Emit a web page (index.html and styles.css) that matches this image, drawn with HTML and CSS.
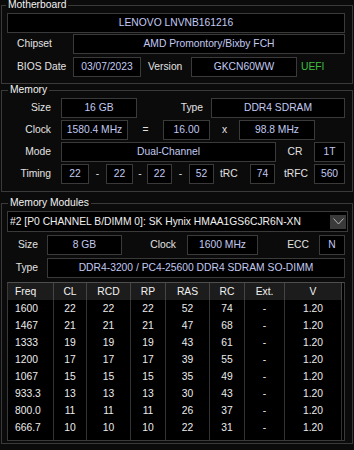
FILE: index.html
```html
<!DOCTYPE html>
<html lang="en">
<head>
    <meta charset="UTF-8">
    <title>Memory</title>
    <link rel="stylesheet" href="styles.css">
</head>
<body>

<section class="group group-mb">
    <h2 class="group-title">Motherboard</h2>
    <div class="row row-first"><span class="box">LENOVO LNVNB161216</span></div>
    <div class="row row-chipset">
        <span class="label label-l">Chipset</span>
        <span class="box">AMD Promontory/Bixby FCH</span>
    </div>
    <div class="row row-bios">
        <span class="label label-l">BIOS Date</span>
        <span class="box">03/07/2023</span>
        <span class="label label-version">Version</span>
        <span class="box">GKCN60WW</span>
        <span class="label uefi">UEFI</span>
    </div>
</section>

<section class="group group-mem">
    <h2 class="group-title">Memory</h2>
    <div class="row row-size">
        <span class="label label-r">Size</span>
        <span class="box">16 GB</span>
        <span class="label label-type">Type</span>
        <span class="box">DDR4 SDRAM</span>
    </div>
    <div class="row row-clock">
        <span class="label label-r">Clock</span>
        <span class="box">1580.4 MHz</span>
        <span class="label sign">=</span>
        <span class="box">16.00</span>
        <span class="label sign">x</span>
        <span class="box">98.8 MHz</span>
    </div>
    <div class="row row-mode">
        <span class="label label-r">Mode</span>
        <span class="box">Dual-Channel</span>
        <span class="label sign">CR</span>
        <span class="box">1T</span>
    </div>
    <div class="row row-timing">
        <span class="label label-r">Timing</span>
        <span class="box">22</span>
        <span class="label sign">-</span>
        <span class="box">22</span>
        <span class="label sign">-</span>
        <span class="box">22</span>
        <span class="label sign">-</span>
        <span class="box">52</span>
        <span class="label label-trc">tRC</span>
        <span class="box">74</span>
        <span class="label label-trfc">tRFC</span>
        <span class="box">560</span>
    </div>
</section>

<section class="group group-mods">
    <h2 class="group-title">Memory Modules</h2>
    <div class="module-select">
        <span>#2 [P0 CHANNEL B/DIMM 0]: SK Hynix HMAA1GS6CJR6N-XN</span>
        <span class="select-arrow">
            <svg width="11" height="7" viewBox="0 0 11 7"><polyline points="0.5,0.5 5.5,6 10.5,0.5" fill="none" stroke="#b4b4b4" stroke-width="1"/></svg>
        </span>
    </div>
    <div class="row row-msize">
        <span class="label label-m">Size</span>
        <span class="box">8 GB</span>
        <span class="label label-mclock">Clock</span>
        <span class="box">1600 MHz</span>
        <span class="label label-ecc">ECC</span>
        <span class="box">N</span>
    </div>
    <div class="row row-mtype">
        <span class="label label-m">Type</span>
        <span class="box">DDR4-3200 / PC4-25600 DDR4 SDRAM SO-DIMM</span>
    </div>

    <div class="spd">
        <table class="spd-table">
            <thead>
            <tr>
                <th class="c-freq freq">Freq</th>
                <th class="c-cl">CL</th>
                <th class="c-rcd">RCD</th>
                <th class="c-rp">RP</th>
                <th class="c-ras">RAS</th>
                <th class="c-rc">RC</th>
                <th class="c-ext">Ext.</th>
                <th class="c-v">V</th>
            </tr>
            </thead>
            <tbody>
            <tr><td class="freq">1600</td><td>22</td><td>22</td><td>22</td><td>52</td><td>74</td><td>-</td><td>1.20</td></tr>
            <tr><td class="freq">1467</td><td>21</td><td>21</td><td>21</td><td>47</td><td>68</td><td>-</td><td>1.20</td></tr>
            <tr><td class="freq">1333</td><td>19</td><td>19</td><td>19</td><td>43</td><td>61</td><td>-</td><td>1.20</td></tr>
            <tr><td class="freq">1200</td><td>17</td><td>17</td><td>17</td><td>39</td><td>55</td><td>-</td><td>1.20</td></tr>
            <tr><td class="freq">1067</td><td>15</td><td>15</td><td>15</td><td>35</td><td>49</td><td>-</td><td>1.20</td></tr>
            <tr><td class="freq">933.3</td><td>13</td><td>13</td><td>13</td><td>30</td><td>43</td><td>-</td><td>1.20</td></tr>
            <tr><td class="freq">800.0</td><td>11</td><td>11</td><td>11</td><td>26</td><td>37</td><td>-</td><td>1.20</td></tr>
            <tr><td class="freq">666.7</td><td>10</td><td>10</td><td>10</td><td>22</td><td>31</td><td>-</td><td>1.20</td></tr>
            <tr class="fill"><td></td><td></td><td></td><td></td><td></td><td></td><td></td><td></td></tr>
            </tbody>
        </table>
    </div>
</section>

</body>
</html>
```

FILE: styles.css
```css
html, body {
    margin: 0;
    padding: 0;
}
body {
    background-color: #0b0b0b;
    font-family: "Liberation Sans", Arial, sans-serif;
    font-size: 10.3px;
    color: #e2e2e2;
}

/* group boxes */
.group {
    margin: 0 1px;
    border: 1px solid #3a3a3a;
    padding: 0 7px 0 5px;
}
.group-mb {
    margin-top: 5px;
    padding-bottom: 6px;
}
.group-mem {
    margin-top: 6px;
    padding-bottom: 7px;
}
.group-mods {
    margin-top: 11px;
    padding-bottom: 2px;
}
.group-title {
    display: table;
    margin: -7px 0 0 1px;
    padding: 0 2px;
    height: 12px;
    line-height: 12px;
    font-size: 10.3px;
    font-weight: normal;
    color: #f2f2f2;
    background-color: #0b0b0b;
}
.group-mb .group-title {
    margin-left: -1px;
}

/* rows */
.row {
    display: grid;
    height: 20px;
    margin-top: 2px;
}
.group-mb .row-chipset {
    margin-top: 1px;
}
.group-mb .row-bios {
    margin-top: 3px;
}
.row-chipset { grid-template-columns: 66px 1fr; }
.row-bios { grid-template-columns: 66px 68px 50px 106px 1fr; }
.row-size { grid-template-columns: 54px 76px 74px 1fr; }
.row-clock { grid-template-columns: 54px 67px 35px 47px 29px 76px 1fr; }
.row-mode { grid-template-columns: 54px 215px 38px 1fr; }
.row-timing { grid-template-columns: 54px 28px 17px 27px 14px 25px 17px 25px 36px 25px 39px 1fr; }
.row-msize {
    grid-template-columns: 40px 75px 65px 71px 61px 1fr;
    margin-top: 3px;
}
.row-mtype {
    grid-template-columns: 40px 1fr;
    margin-top: 3px;
}

.box {
    box-sizing: border-box;
    height: 20px;
    line-height: 18px;
    border: 1px solid #3a3a3a;
    background-color: #000;
    color: #c2caf2;
    text-align: center;
    white-space: nowrap;
    overflow: hidden;
}

.label {
    line-height: 20px;
    white-space: nowrap;
    color: #e2e2e2;
}
.label-l { padding-left: 10px; }
.label-r { text-align: right; padding-right: 10px; }
.label-type { text-align: right; padding-right: 8px; }
.label-version { padding-left: 7px; }
.label-trc { padding-left: 6px; }
.label-trfc { padding-left: 9px; }
.label-m { text-align: right; padding-right: 9px; }
.label-mclock { text-align: right; padding-right: 11px; }
.label-ecc { text-align: right; padding-right: 10px; }
.sign { text-align: center; }
.uefi {
    padding-left: 4px;
    color: #3fbf3f;
}

/* module dropdown */
.module-select {
    display: flex;
    align-items: center;
    box-sizing: border-box;
    height: 21px;
    margin-top: 2px;
    margin-right: -3px;
    padding-left: 2px;
    border: 1px solid #3a3a3a;
    background-color: #000;
    color: #f0f0f0;
    white-space: nowrap;
}
.select-arrow {
    display: flex;
    align-items: center;
    justify-content: center;
    width: 16px;
    height: 14px;
    margin-left: auto;
    margin-right: 1px;
    background-color: #3a3a3a;
}

/* SPD timings table */
.spd {
    box-sizing: border-box;
    height: 159px;
    margin-top: 4px;
    border: 1px solid #3a3a3a;
    border-top-color: #4e4e4e;
    background-color: #000;
}
.spd-table {
    width: 334px;
    height: 100%;
    table-layout: fixed;
    border-spacing: 0;
}
.spd-table th, .spd-table td {
    box-sizing: border-box;
    padding: 0;
    border-right: 1px solid #333;
    text-align: center;
    white-space: nowrap;
}
.spd-table th {
    height: 17px;
    font-weight: normal;
    color: #f2f2f2;
    background-color: #1c1c1c;
    border-right-color: #444;
}
.spd-table td {
    height: 17px;
    color: #ececec;
}
.spd-table tr.fill td {
    height: auto;
}
.spd-table .freq {
    text-align: left;
    padding-left: 7px;
}
.c-freq { width: 46px; }
.c-cl { width: 33px; }
.c-rcd { width: 44px; }
.c-rp { width: 35px; }
.c-ras { width: 44px; }
.c-rc { width: 35px; }
.c-ext { width: 40px; }
.c-v { width: 57px; }
```
